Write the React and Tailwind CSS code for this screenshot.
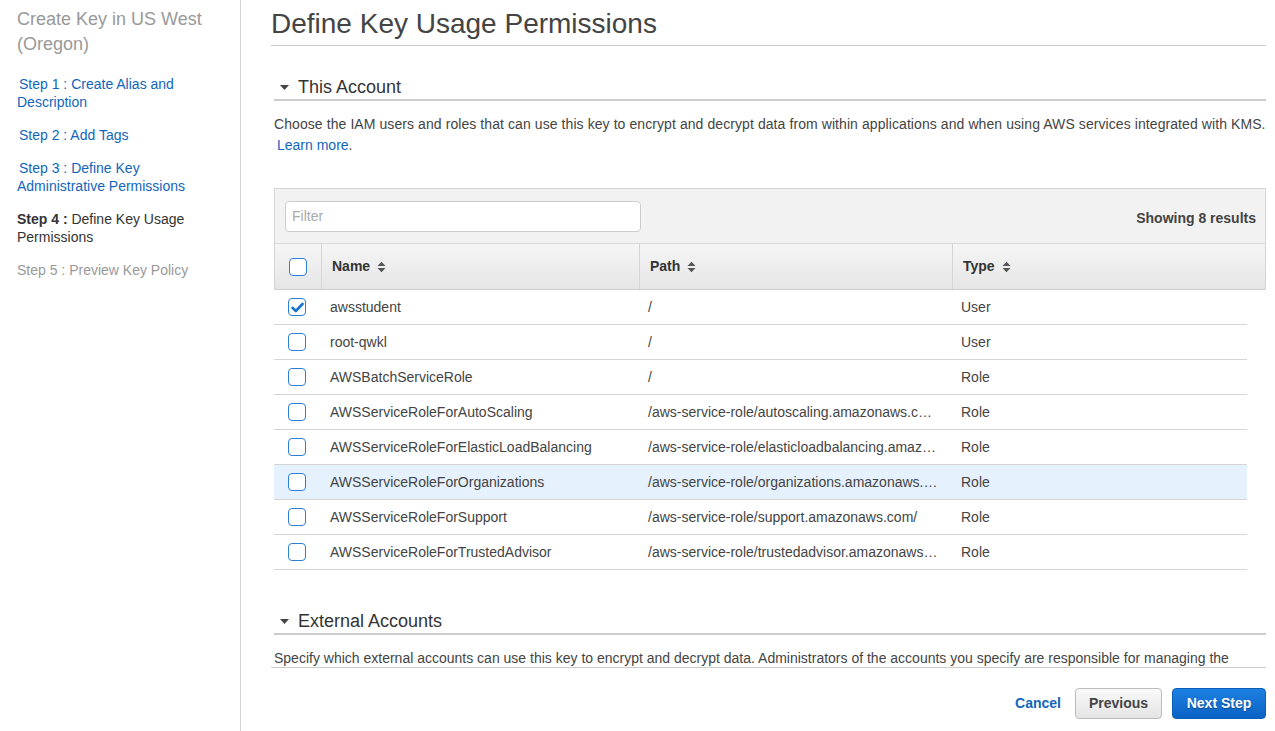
import React from "react";

const rows = [
  { name: "awsstudent", path: "/", type: "User", checked: true },
  { name: "root-qwkl", path: "/", type: "User" },
  { name: "AWSBatchServiceRole", path: "/", type: "Role" },
  { name: "AWSServiceRoleForAutoScaling", path: "/aws-service-role/autoscaling.amazonaws.com/", type: "Role" },
  { name: "AWSServiceRoleForElasticLoadBalancing", path: "/aws-service-role/elasticloadbalancing.amazonaws.com/", type: "Role" },
  { name: "AWSServiceRoleForOrganizations", path: "/aws-service-role/organizations.amazonaws.com/", type: "Role", highlight: true },
  { name: "AWSServiceRoleForSupport", path: "/aws-service-role/support.amazonaws.com/", type: "Role" },
  { name: "AWSServiceRoleForTrustedAdvisor", path: "/aws-service-role/trustedadvisor.amazonaws.com/", type: "Role" },
];

function SortIcon() {
  return (
    <svg width="9" height="12" viewBox="0 0 9 12" className="ml-[7px]">
      <polygon points="0.5,5 4.5,0.8 8.5,5" fill="#555" />
      <polygon points="0.5,7 4.5,11.2 8.5,7" fill="#555" />
    </svg>
  );
}

function Caret() {
  return (
    <svg width="9" height="5" viewBox="0 0 9 5" className="mr-[9px] ml-[6px]">
      <polygon points="0,0 9,0 4.5,5" fill="#444" />
    </svg>
  );
}

function Checkbox({ checked }) {
  return (
    <div className="w-[18px] h-[18px] rounded-[4px] border border-[#2a7fd6] bg-white flex items-center justify-center">
      {checked && (
        <svg width="13" height="11" viewBox="0 0 13 11">
          <path d="M1.5 5.8 L4.8 9 L11.5 2" fill="none" stroke="#1a73d0" strokeWidth="2.6" strokeLinecap="round" strokeLinejoin="round" />
        </svg>
      )}
    </div>
  );
}

export default function App() {
  return (
    <div
      className="flex w-[1275px] h-[731px] bg-white overflow-hidden text-[#444]"
      style={{ fontFamily: '"Liberation Sans", Arial, sans-serif' }}
    >
      {/* Sidebar */}
      <div className="w-[241px] shrink-0 border-r border-[#d5d5d5] pl-[17px] pt-[7px]">
        <div className="w-[210px]">
          <div className="text-[18px] leading-[25px] text-[#999]">Create Key in US West (Oregon)</div>
          <div className="mt-[18px] text-[14px] leading-[18px]">
            <div className="text-[#1166bb] indent-[2px] mb-[15px]">Step 1 : Create Alias and Description</div>
            <div className="text-[#1166bb] indent-[2px] mb-[15px]">Step 2 : Add Tags</div>
            <div className="text-[#1166bb] indent-[2px] mb-[15px]">Step 3 : Define Key Administrative Permissions</div>
            <div className="text-[#333] mb-[15px]">
              <span className="font-bold">Step 4 :</span> Define Key Usage Permissions
            </div>
            <div className="text-[#999]">Step 5 : Preview Key Policy</div>
          </div>
        </div>
      </div>

      {/* Main */}
      <div className="flex-1 flex flex-col pl-[30px] pr-[9px]">
        <div className="h-[668px] shrink-0 overflow-hidden border-b border-[#ccc]">
          <h1 className="text-[28px] leading-[34px] pt-[7px] pb-[4px] border-b border-[#ccc] text-[#444]">
            Define Key Usage Permissions
          </h1>

          <div className="ml-[3px]">
            {/* This Account */}
            <div className="mt-[30px] pb-[1px] border-b-2 border-[#ccc] flex items-center text-[18px] leading-[22px] text-[#333]">
              <Caret />
              This Account
            </div>
            <div className="mt-[13px] text-[14px] leading-[21px] text-[#444]">
              <div className="whitespace-nowrap tracking-[0.08px]">
                Choose the IAM users and roles that can use this key to encrypt and decrypt data from within applications and when using AWS services integrated with KMS.
              </div>
              <div className="pl-[3px]">
                <span className="text-[#1166bb]">Learn more</span>.
              </div>
            </div>

            {/* Table */}
            <div className="mt-[32px] text-[14px]">
              <div className="border border-b-0 border-[#d5d5d5]">
                <div className="bg-[#f2f2f2] flex items-center justify-between pl-[10px] pr-[9px] pt-[12px] pb-[11px] border-b border-[#d9d9d9]">
                  <div className="w-[356px] h-[31px] rounded-[4px] border border-[#ccc] bg-white flex items-center pl-[6px] text-[#aaa]">
                    Filter
                  </div>
                  <div className="font-bold text-[#444] pt-[3px]">Showing 8 results</div>
                </div>
                <div className="flex h-[46px] bg-gradient-to-b from-[#f5f5f5] to-[#e6e6e6] border-b border-[#ccc] font-bold text-[#333]">
                  <div className="w-[47px] shrink-0 border-r border-[#d5d5d5] flex items-center pl-[14px]">
                    <Checkbox />
                  </div>
                  <div className="w-[318px] shrink-0 border-r border-[#d5d5d5] flex items-center pl-[10px]">
                    Name <SortIcon />
                  </div>
                  <div className="w-[313px] shrink-0 border-r border-[#d5d5d5] flex items-center pl-[10px]">
                    Path <SortIcon />
                  </div>
                  <div className="flex-1 flex items-center pl-[10px]">
                    Type <SortIcon />
                  </div>
                </div>
              </div>
              <div className="w-[973px]">
                {rows.map((r) => (
                  <div
                    key={r.name}
                    className={`flex h-[35px] items-center border-b border-[#d5d5d5] ${r.highlight ? "bg-[#e5f1fd]" : "bg-white"}`}
                  >
                    <div className="w-[46px] shrink-0 pl-[14px] flex items-center">
                      <Checkbox checked={r.checked} />
                    </div>
                    <div className="w-[318px] shrink-0 pl-[10px] truncate">{r.name}</div>
                    <div className="w-[313px] shrink-0 pl-[10px] pr-[12px] truncate">{r.path}</div>
                    <div className="flex-1 pl-[10px]">{r.type}</div>
                  </div>
                ))}
              </div>
            </div>

            {/* External Accounts */}
            <div className="mt-[40px] pb-[1px] border-b-2 border-[#ccc] flex items-center text-[18px] leading-[22px] text-[#333]">
              <Caret />
              External Accounts
            </div>
            <div className="mt-[13px] text-[14px] leading-[21px] text-[#444]">
              Specify which external accounts can use this key to encrypt and decrypt data. Administrators of the accounts you specify are responsible for managing the permissions that allow their IAM users and roles to use this key.
            </div>
          </div>
        </div>

        {/* Footer */}
        <div className="flex justify-end items-center pt-[20px] text-[14px] font-bold">
          <span className="text-[#1166bb] mr-[14px]">Cancel</span>
          <button className="w-[87px] h-[31px] rounded-[4px] border border-[#bbb] bg-gradient-to-b from-[#fafafa] to-[#e4e4e4] text-[#444] mr-[10px]">
            Previous
          </button>
          <button
            className="w-[94px] h-[31px] rounded-[4px] border border-[#0b5fba] bg-gradient-to-b from-[#1d80e2] to-[#0a62c4] text-white"
            style={{ textShadow: "0 1px 1px rgba(0,0,0,0.35)" }}
          >
            Next Step
          </button>
        </div>
      </div>
    </div>
  );
}
